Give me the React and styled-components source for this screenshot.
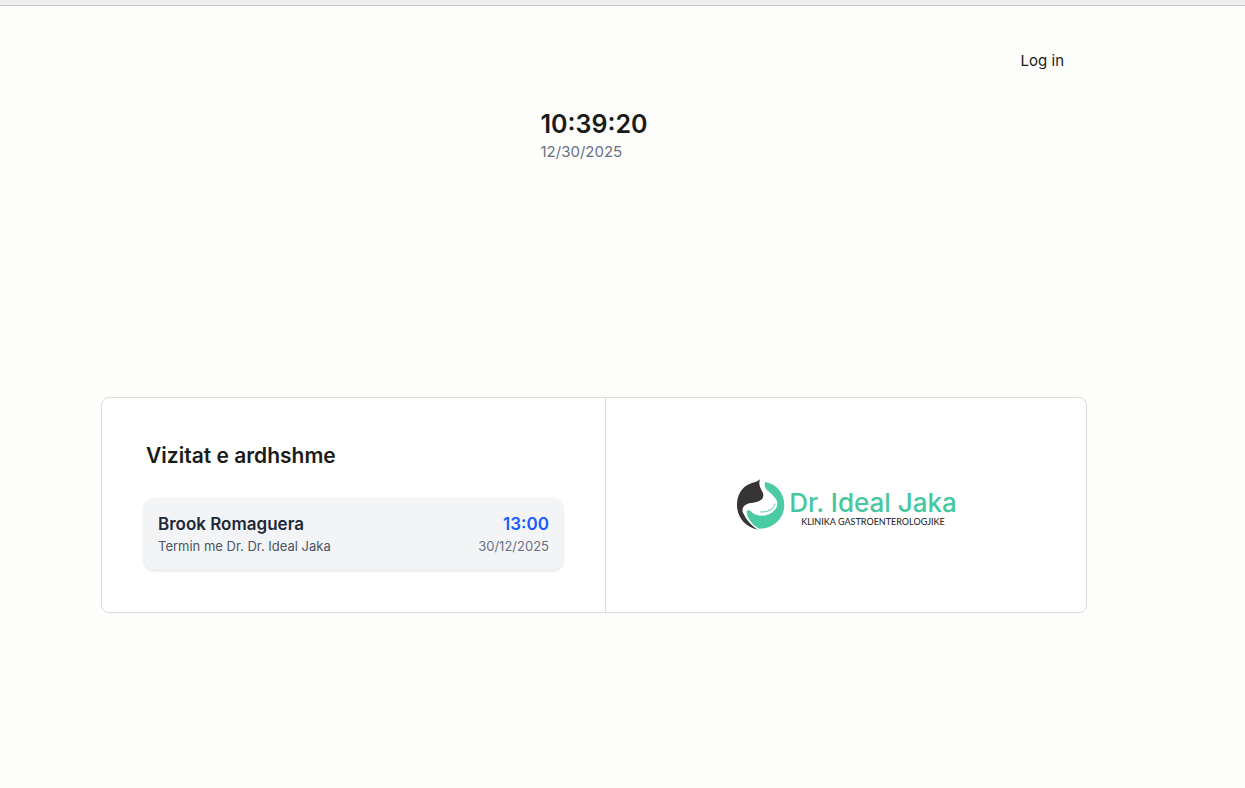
import styled, { createGlobalStyle } from "styled-components";

const GlobalStyle = createGlobalStyle`
    * {
        box-sizing: border-box;
        margin: 0;
    }

    body {
        background: #fdfdfc;
        color: #1b1b18;
        font-family: Inter, "Liberation Sans", sans-serif;
    }
`;

const TopStrip = styled.div`
    height: 6px;
    background: #efefef;
    border-bottom: 1px solid #c8c8c8;
`;

const Page = styled.div`
    padding: 36px 158px 36px 101px;
    display: flex;
    flex-direction: column;
`;

const Header = styled.header`
    display: flex;
    justify-content: flex-end;
`;

const LoginLink = styled.a`
    padding: 6px 23px;
    color: #1b1b18;
    font-size: 15px;
    line-height: 26px;
    text-decoration: none;
`;

const Clock = styled.div`
    align-self: center;
    margin-top: 28px;
`;

const Time = styled.div`
    font-size: 25px;
    font-weight: 600;
    line-height: 32px;
`;

const Today = styled.div`
    color: #6a7282;
    font-size: 15px;
    line-height: 24px;
`;

const Card = styled.main`
    margin-top: 233px;
    display: grid;
    grid-template-columns: 505fr 481fr;
    background: #fff;
    border: 1px solid #dcdcd9;
    border-radius: 8px;
`;

const Visits = styled.section`
    padding: 42px;
    border-right: 1px solid #dcdcd9;
`;

const Title = styled.h1`
    padding: 0 2px;
    margin-bottom: 27px;
    font-size: 21px;
    font-weight: 600;
    line-height: 31px;
`;

const VisitList = styled.ul`
    padding: 0;
    list-style: none;
`;

const Visit = styled.li`
    padding: 14px;
    display: flex;
    justify-content: space-between;
    background: #f3f4f6;
    border-radius: 10px;
    box-shadow: 0 1px 3px rgba(0, 0, 0, 0.14);
`;

const VisitSide = styled.div`
    text-align: ${({$align}) => $align || "left"};
`;

const Strong = styled.p`
    color: ${({$color}) => $color};
    font-size: 17px;
    font-weight: 600;
    line-height: 24px;
`;

const Small = styled.p`
    color: ${({$color}) => $color};
    font-size: 13px;
    line-height: 20px;
`;

const Brand = styled.section`
    display: flex;
    align-items: center;
    justify-content: center;
`;

const Mark = styled.svg`
    width: 52px;
    height: 54px;
    flex-shrink: 0;
`;

const BrandText = styled.div`
    padding: 8px 0 0 2px;
    text-align: center;
`;

const BrandName = styled.p`
    color: #46c7a0;
    font-size: 26px;
    font-weight: 500;
    line-height: 26px;
`;

const BrandLine = styled.p`
    color: #2f2d2e;
    font-family: Lato, "Liberation Sans", sans-serif;
    font-size: 9px;
    font-weight: 500;
    line-height: 12px;
`;

const StomachMark = () => (
    <Mark viewBox="0 0 156 162" aria-hidden="true">
        <path
            fill="#373435"
            d="M75 4C68 12 56 13 43 18C20 28 6 52 6 81C6 117 30 147 69 155C46 141 31 121 23 101C20 86 32 77 48 75C66 73 84 68 85 53C86 38 67 28 75 4Z"
        />
        <path
            fill="#4acba4"
            d="M90 12C123 16 148 45 148 81C148 120 116 153 73 152C50 140 35 119 35 99C43 94 47 99 53 105C70 117 97 115 113 102C128 90 131 75 122 62C115 53 108 46 99 39C90 31 88 23 90 12Z"
        />
        <path
            fill="none"
            stroke="#4acba4"
            strokeWidth="3"
            strokeLinecap="round"
            d="M120 78C116 94 98 103 77 102"
        />
    </Mark>
);

const App = () => (
    <>
        <GlobalStyle />
        <TopStrip />
        <Page>
            <Header>
                <LoginLink href="#login">Log in</LoginLink>
            </Header>
            <Clock>
                <Time>10:39:20</Time>
                <Today>12/30/2025</Today>
            </Clock>
            <Card>
                <Visits>
                    <Title>Vizitat e ardhshme</Title>
                    <VisitList>
                        <Visit>
                            <VisitSide>
                                <Strong $color="#1e2939">Brook Romaguera</Strong>
                                <Small $color="#4a5565">Termin me Dr. Dr. Ideal Jaka</Small>
                            </VisitSide>
                            <VisitSide $align="right">
                                <Strong $color="#155dfc">13:00</Strong>
                                <Small $color="#6a7282">30/12/2025</Small>
                            </VisitSide>
                        </Visit>
                    </VisitList>
                </Visits>
                <Brand>
                    <StomachMark />
                    <BrandText>
                        <BrandName>Dr. Ideal Jaka</BrandName>
                        <BrandLine>KLINIKA GASTROENTEROLOGJIKE</BrandLine>
                    </BrandText>
                </Brand>
            </Card>
        </Page>
    </>
);

export default App;
